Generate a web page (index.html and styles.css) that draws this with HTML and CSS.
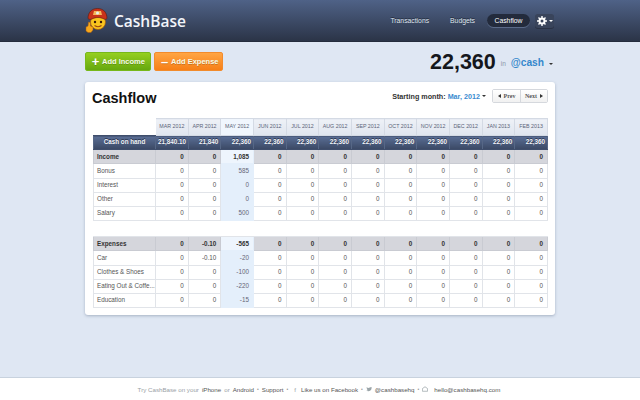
FILE: index.html
```html
<!DOCTYPE html>
<html lang="en">
<head>
<meta charset="utf-8">
<title>CashBase</title>
<link rel="stylesheet" href="styles.css">
</head>
<body>
<header class="topbar">
  <div class="wrap topbar-in">
    <div class="brand">
      <svg class="logo" width="23" height="25" viewBox="0 0 23 25">
        <circle cx="13" cy="14" r="7.500" fill="#f9c51f" stroke="#a85a10" stroke-width=".7"/>
        <path d="M3 10.500C3 4 7 .5 12.500 .5S22 4 22 10.500c-1 1-2 1-3 .5-4-2-8-2-12 0-1.500 .7-3 .5-4-.5z" fill="#c8321a" stroke="#5d1a0e" stroke-width=".6"/>
        <path d="M9 3h7l1 4H8z" fill="#f4b65a"/>
        <circle cx="12.500" cy="5" r="1.500" fill="#e8f0f0"/>
        <circle cx="10" cy="14" r="1.200" fill="#3a1a08"/>
        <circle cx="16" cy="14" r="1.200" fill="#3a1a08"/>
        <path d="M9.500 17.500q3.500 2.500 7 0" stroke="#a0480c" stroke-width="1.100" fill="none"/>
        <path d="M1 19l2-1 .5-4 2 .5V18l2.500 1v3l-2 2.500H3L1 23z" fill="#f7a81c" stroke="#a85a10" stroke-width=".5"/>
      </svg>
      <span class="brand-name">CashBase</span>
    </div>
    <nav class="nav">
      <a class="nav-link">Transactions</a>
      <a class="nav-link">Budgets</a>
      <a class="nav-link nav-active">Cashflow</a>
      <a class="nav-gear">
        <svg width="10" height="10" viewBox="0 0 10 10"><circle cx="5" cy="5" r="2.500" fill="none" stroke="#fff" stroke-width="2"/><path d="M5 0v2M5 8v2M0 5h2M8 5h2M1.500 1.500l1.400 1.400M7.100 7.100l1.400 1.400M1.500 8.500l1.400-1.400M7.100 2.900l1.400-1.400" stroke="#fff" stroke-width="1.400"/></svg>
        <span class="caret caret-white"></span>
      </a>
    </nav>
  </div>
</header>

<main class="wrap">
  <div class="actions">
    <div class="buttons">
      <a class="btn btn-green"><span class="btn-icon">+</span>Add Income</a>
      <a class="btn btn-orange"><span class="btn-icon">–</span>Add Expense</a>
    </div>
    <div class="balance">
      <span class="balance-num">22,360</span>
      <span class="balance-in">in</span>
      <span class="balance-acct">@cash</span>
      <span class="caret caret-dark"></span>
    </div>
  </div>

  <section class="card">
    <div class="card-head">
      <h1>Cashflow</h1>
      <div class="month-tools">
        <span class="month-label">Starting month: <b>Mar, 2012</b></span>
        <span class="caret caret-dark"></span>
        <div class="pager">
          <a class="pager-btn"><i class="arr arr-l"></i>Prev</a>
          <a class="pager-btn">Next<i class="arr arr-r"></i></a>
        </div>
      </div>
    </div>

    <table class="flow">
      <colgroup><col class="c-name"><col span="12"></colgroup>
      <thead>
        <tr class="months">
          <th class="blank"></th><th>MAR 2012</th><th>APR 2012</th><th class="now">MAY 2012</th><th>JUN 2012</th><th>JUL 2012</th><th>AUG 2012</th><th>SEP 2012</th><th>OCT 2012</th><th>NOV 2012</th><th>DEC 2012</th><th>JAN 2013</th><th>FEB 2013</th>
        </tr>
        <tr class="hand">
          <th>Cash on hand</th><td>21,840.10</td><td>21,840</td><td>22,360</td><td>22,360</td><td>22,360</td><td>22,360</td><td>22,360</td><td>22,360</td><td>22,360</td><td>22,360</td><td>22,360</td><td>22,360</td>
        </tr>
      </thead>
      <tbody>
        <tr class="group"><th>Income</th><td>0</td><td>0</td><td class="now">1,085</td><td>0</td><td>0</td><td>0</td><td>0</td><td>0</td><td>0</td><td>0</td><td>0</td><td>0</td></tr>
        <tr><th>Bonus</th><td>0</td><td>0</td><td class="now">585</td><td>0</td><td>0</td><td>0</td><td>0</td><td>0</td><td>0</td><td>0</td><td>0</td><td>0</td></tr>
        <tr><th>Interest</th><td>0</td><td>0</td><td class="now">0</td><td>0</td><td>0</td><td>0</td><td>0</td><td>0</td><td>0</td><td>0</td><td>0</td><td>0</td></tr>
        <tr><th>Other</th><td>0</td><td>0</td><td class="now">0</td><td>0</td><td>0</td><td>0</td><td>0</td><td>0</td><td>0</td><td>0</td><td>0</td><td>0</td></tr>
        <tr><th>Salary</th><td>0</td><td>0</td><td class="now">500</td><td>0</td><td>0</td><td>0</td><td>0</td><td>0</td><td>0</td><td>0</td><td>0</td><td>0</td></tr>
      </tbody>
      <tbody>
        <tr class="spacer"><td colspan="13"></td></tr>
        <tr class="group"><th>Expenses</th><td>0</td><td>-0.10</td><td class="now">-565</td><td>0</td><td>0</td><td>0</td><td>0</td><td>0</td><td>0</td><td>0</td><td>0</td><td>0</td></tr>
        <tr><th>Car</th><td>0</td><td>-0.10</td><td class="now">-20</td><td>0</td><td>0</td><td>0</td><td>0</td><td>0</td><td>0</td><td>0</td><td>0</td><td>0</td></tr>
        <tr><th>Clothes &amp; Shoes</th><td>0</td><td>0</td><td class="now">-100</td><td>0</td><td>0</td><td>0</td><td>0</td><td>0</td><td>0</td><td>0</td><td>0</td><td>0</td></tr>
        <tr><th>Eating Out &amp; Coffe...</th><td>0</td><td>0</td><td class="now">-220</td><td>0</td><td>0</td><td>0</td><td>0</td><td>0</td><td>0</td><td>0</td><td>0</td><td>0</td></tr>
        <tr><th>Education</th><td>0</td><td>0</td><td class="now">-15</td><td>0</td><td>0</td><td>0</td><td>0</td><td>0</td><td>0</td><td>0</td><td>0</td><td>0</td></tr>
      </tbody>
    </table>
  </section>
</main>

<footer class="footer">
  <span class="muted">Try CashBase on your</span>
  <a>iPhone</a>
  <span class="muted">or</span>
  <a>Android</a>
  <span class="dot">•</span>
  <a>Support</a>
  <span class="dot">•</span>
  <span class="muted fb">f</span>
  <a>Like us on Facebook</a>
  <span class="dot">•</span>
  <svg width="6" height="5" viewBox="0 0 8 7"><path d="M0 5q3 2 6 0 2-2 1.500-4L8 0 6.500 .5Q5 -.3 4 1.500 2 1.500 .5 .5q0 2 1.500 2.500L1 3q.5 1.500 1.500 1.500Q1.500 5.200 0 5z" fill="#9aa4a8"/></svg>
  <a>@cashbasehq</a>
  <span class="dot">•</span>
  <svg width="6" height="6" viewBox="0 0 8 7"><path d="M.5 3L4 .5 7.500 3v3.500h-7z" fill="none" stroke="#9aa4a8"/></svg>
  <a class="mail">hello@cashbasehq.com</a>
</footer>
</body>
</html>
```
FILE: styles.css
```css
* { box-sizing: border-box; }
html, body { margin: 0; padding: 0; }
body {
  height: 400px;
  overflow: hidden;
  display: flex;
  flex-direction: column;
  background: #dfe7f3;
  font-family: "Liberation Sans", Arial, sans-serif;
  color: #333;
}
.wrap { width: 470px; margin: 0 auto; }
.topbar {
  height: 42px;
  flex: none;
  background: linear-gradient(#4f6287, #2b3447);
  border-bottom: 1px solid #252c3c;
}
.topbar-in { display: flex; justify-content: space-between; align-items: center; height: 41px; }
.brand { display: flex; align-items: center; gap: 6px; }
.logo { display: block; margin-bottom: 1px; }
.brand-name {
  font-family: "Open Sans", sans-serif;
  font-size: 15.500px;
  font-weight: 600;
  color: #f2f5fa;
}
.nav { display: flex; align-items: center; }
.nav-link {
  font-size: 6.800px;
  color: #dfe5ef;
  margin-right: 21px;
  text-shadow: 0 -1px 0 #222a3a;
}
.nav-link:nth-child(2) { margin-right: 12px; }
.nav-active {
  margin-right: 5px;
  background: #232b3c;
  color: #fff;
  border-radius: 8px;
  padding: 0 7.500px;
  height: 13px;
  line-height: 13px;
  box-shadow: 0 1px 0 #5a6a88;
}
.nav-gear {
  display: flex;
  align-items: center;
  justify-content: center;
  gap: 2px;
  width: 19px;
  height: 14px;
  margin-right: 1px;
  background: #39445b;
  border-radius: 3px;
  box-shadow: 0 1px 0 #2a3244;
}
.caret {
  display: inline-block;
  width: 0;
  height: 0;
  border-left: 2px solid transparent;
  border-right: 2px solid transparent;
  border-top: 2px solid #333;
}
.caret-white { border-top-color: #fff; }
.actions {
  display: flex;
  justify-content: space-between;
  height: 40px;
  padding-top: 10px;
}
.buttons { display: flex; gap: 3px; }
.btn {
  display: flex;
  align-items: center;
  height: 19px;
  padding: 0 0 0 4px;
  border-radius: 2px;
  color: #f4f9e8;
  font-size: 7.500px;
  font-weight: bold;
  white-space: nowrap;
  text-shadow: 0 1px 0 rgba(0,0,0,.2);
}
.btn-icon {
  font-size: 13px;
  width: 11px;
  margin-right: 1px;
  text-align: center;
  color: #fff;
  line-height: 19px;
}
.btn-green { width: 66px; background: linear-gradient(#95cf20, #66a80f); border: 1px solid #77b81a; }
.btn-orange { width: 69px; background: linear-gradient(#ffa544, #f77f17); border: 1px solid #f28b2c; }
.balance { display: flex; align-items: center; height: 21px; gap: 5px; padding-right: 2px; }
.balance-num { font-size: 21.500px; font-weight: bold; color: #15171c; }
.balance-in { font-size: 6.500px; color: #8b96a8; margin-top: 2px; }
.balance-acct { font-size: 10.200px; font-weight: bold; color: #3588cc; }
.caret-dark { margin-top: 2px; }
.card {
  height: 233px;
  background: #fff;
  border-radius: 3px;
  padding: 0 7px 0 8px;
  box-shadow: 0 1px 3px rgba(60,80,110,.35);
}
.card-head {
  display: flex;
  justify-content: space-between;
  align-items: flex-start;
  height: 36px;
}
.card-head h1 {
  margin: 7px 0 0 -1px;
  font-size: 14.500px;
  line-height: 18px;
  color: #111;
}
.month-tools { display: flex; align-items: center; padding-top: 7px; }
.month-label { font-size: 7.200px; font-weight: bold; color: #333; }
.month-label b { color: #3a8bd0; }
.month-tools .caret { margin: 0 6px 0 2px; }
.pager { display: flex; border: 1px solid #d5d8dd; border-radius: 2px; height: 14px; }
.pager-btn {
  display: flex;
  align-items: center;
  justify-content: center;
  gap: 3px;
  width: 27px;
  font: bold 6px "Liberation Serif", serif;
  color: #555;
  background: linear-gradient(#fff, #f1f1f1);
}
.pager-btn + .pager-btn { border-left: 1px solid #d5d8dd; }
.arr { width: 0; height: 0; border-top: 2px solid transparent; border-bottom: 2px solid transparent; }
.arr-l { border-right: 3px solid #333; }
.arr-r { border-left: 3px solid #333; }
.flow {
  width: 455px;
  table-layout: fixed;
  border-collapse: collapse;
  font-size: 6.300px;
  line-height: 1;
}
.c-name { width: 62px; }
.flow th, .flow td {
  height: 14.200px;
  padding: 0 4px;
  border: 1px solid #e1e4e9;
  text-align: right;
  font-weight: normal;
  color: #555;
  white-space: nowrap;
  overflow: hidden;
}
.flow tbody th { text-align: left; padding-left: 3px; }
.months th {
  height: 17px;
  padding: 0;
  text-align: center;
  font-size: 5.300px;
  color: #5b6478;
  background: linear-gradient(#eef1f7, #dfe5ef);
  border-color: #d4dae4;
}
.months th.now { background: #f0f6fd; }
.months th.blank { background: none; border-color: transparent; border-bottom-color: #3f4e6c; }
.hand th, .hand td {
  background: linear-gradient(#5a6e95, #3a4864);
  border-color: #3f4e6c #566786;
  color: #f2f4f8;
  font-weight: bold;
  font-size: 6.300px;
  text-shadow: 0 -1px 0 #2c3650;
}
.hand th { text-align: center; }
.hand td { padding: 0 2px; }
.group th, .group td {
  background: #d5d6dc;
  border-color: #c9cbd2;
  color: #333;
  font-weight: bold;
}
.flow td.now { background: #e4effb; border-color: #e4effb; color: #667; }
.flow .group td.now { background: #eef5fd; color: #333; }
.flow tr.spacer td { height: 16px; border-left: 0; border-right: 0; background: none; }
.footer {
  margin-top: auto;
  height: 23px;
  flex: none;
  display: flex;
  align-items: center;
  justify-content: center;
  gap: 3px;
  background: #fff;
  border-top: 1px solid #c8d2de;
  font-size: 6.200px;
  color: #555;
  padding-right: 2px;
}
.muted { color: #9a9fa6; }
.dot { color: #999; font-size: 5px; }
.fb { margin: 0 2px 0 3px; }
.mail { margin-left: 3px; }
```
